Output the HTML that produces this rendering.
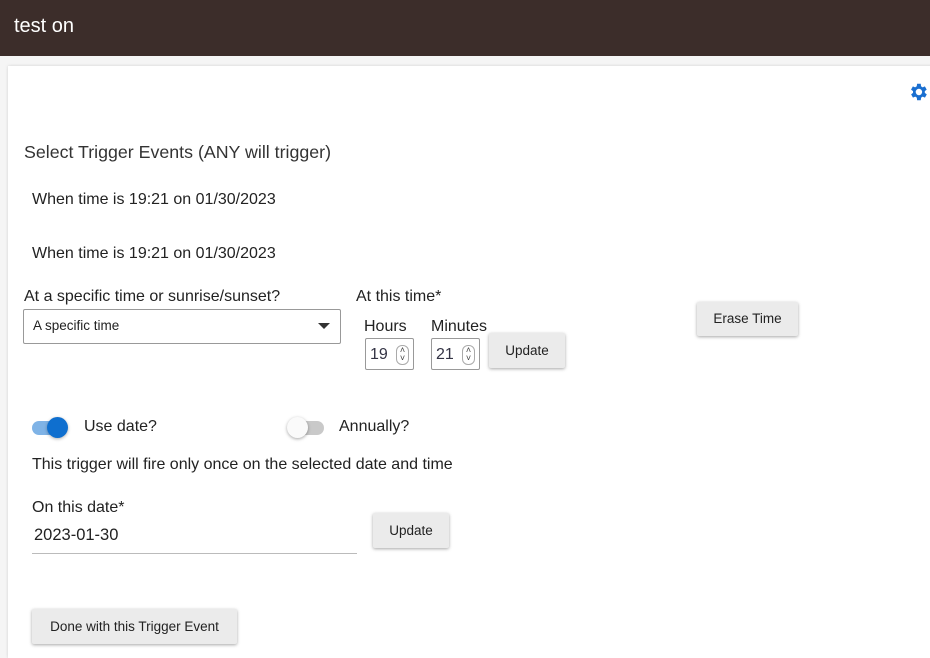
<!DOCTYPE html>
<html><head><style>
body{margin:0;width:930px;height:658px;background:#f5f5f5;font-family:"Liberation Sans",sans-serif;color:#222;position:relative;overflow:hidden}
.hdr{position:absolute;left:0;top:0;width:930px;height:56px;background:#3c2d2a;color:#fff;font-size:20px}
.hdr span{position:absolute;left:14px;top:15px}
.card{position:absolute;left:8px;top:66px;width:930px;height:592px;background:#fff;box-shadow:0 0 3px rgba(0,0,0,.15)}
.a{position:absolute;white-space:nowrap;font-size:16px}
.btn{position:absolute;background:#ebebeb;border-radius:2px;box-shadow:0 1px 3px rgba(0,0,0,.35);font-size:13.5px;text-align:center;color:#222}
.num{position:absolute;border:1px solid #999;border-radius:2px;height:30px;width:47px;background:#fff;font-size:16px;color:#334}
.sp{position:absolute;left:30px;top:6px;width:11px;height:18px;border:1px solid #aaa;border-radius:6px;font-size:9px;line-height:8px;text-align:center;color:#444}
</style></head><body>
<div class="hdr"><span>test on</span></div>
<div class="card"></div>
<svg style="position:absolute;left:907px;top:81px" width="22" height="22" viewBox="0 0 24 24"><path fill="#1a6fd0" d="M19.4 13a7.5 7.5 0 000-2l2.1-1.6-2-3.5-2.5 1a7 7 0 00-1.7-1L15 3h-4l-.4 2.9a7 7 0 00-1.7 1l-2.5-1-2 3.5L6.6 11a7.5 7.5 0 000 2l-2.1 1.6 2 3.5 2.5-1a7 7 0 001.7 1L11 21h4l.4-2.9a7 7 0 001.7-1l2.5 1 2-3.5zM13 15.5a3.5 3.5 0 110-7 3.5 3.5 0 010 7z"/></svg>
<div class="a" style="left:24px;top:142px;font-size:17.8px;color:#333">Select Trigger Events (ANY will trigger)</div>
<div class="a" style="left:32px;top:191px">When time is 19:21 on 01/30/2023</div>
<div class="a" style="left:32px;top:245px">When time is 19:21 on 01/30/2023</div>
<div class="a" style="left:24px;top:288px">At a specific time or sunrise/sunset?</div>
<div style="position:absolute;left:23px;top:309px;width:316px;height:33px;border:1px solid #999;border-radius:2px;background:#fff"></div>
<div class="a" style="left:33px;top:318px;font-size:13.5px">A specific time</div>
<div style="position:absolute;left:318px;top:323px;width:0;height:0;border-left:6px solid transparent;border-right:6px solid transparent;border-top:6px solid #333"></div>
<div class="a" style="left:356px;top:288px">At this time*</div>
<div class="a" style="left:364px;top:318px">Hours</div>
<div class="a" style="left:431px;top:318px">Minutes</div>
<div class="num" style="left:365px;top:338px"><span style="position:absolute;left:4px;top:7px">19</span><span class="sp">˄<br>˅</span></div>
<div class="num" style="left:431px;top:338px"><span style="position:absolute;left:4px;top:7px">21</span><span class="sp">˄<br>˅</span></div>
<div class="btn" style="left:489px;top:333px;width:76px;height:35px;line-height:35px">Update</div>
<div class="btn" style="left:697px;top:302px;width:101px;height:34px;line-height:34px">Erase Time</div>
<div style="position:absolute;left:32px;top:421px;width:34px;height:14px;border-radius:7px;background:#7fb3e6"></div>
<div style="position:absolute;left:47px;top:417px;width:21px;height:21px;border-radius:50%;background:#0f6fcf;box-shadow:0 1px 3px rgba(0,0,0,.3)"></div>
<div class="a" style="left:84px;top:418px">Use date?</div>
<div style="position:absolute;left:290px;top:421px;width:34px;height:14px;border-radius:7px;background:#c9c9c9"></div>
<div style="position:absolute;left:287px;top:417px;width:21px;height:21px;border-radius:50%;background:#fafafa;box-shadow:0 1px 3px rgba(0,0,0,.35)"></div>
<div class="a" style="left:339px;top:418px">Annually?</div>
<div class="a" style="left:32px;top:456px">This trigger will fire only once on the selected date and time</div>
<div class="a" style="left:32px;top:499px">On this date*</div>
<div class="a" style="left:34px;top:526px;font-size:16.5px">2023-01-30</div>
<div style="position:absolute;left:32px;top:553px;width:325px;height:1px;background:#bbb"></div>
<div class="btn" style="left:373px;top:513px;width:76px;height:35px;line-height:35px">Update</div>
<div class="btn" style="left:32px;top:609px;width:205px;height:35px;line-height:35px">Done with this Trigger Event</div>
</body></html>
